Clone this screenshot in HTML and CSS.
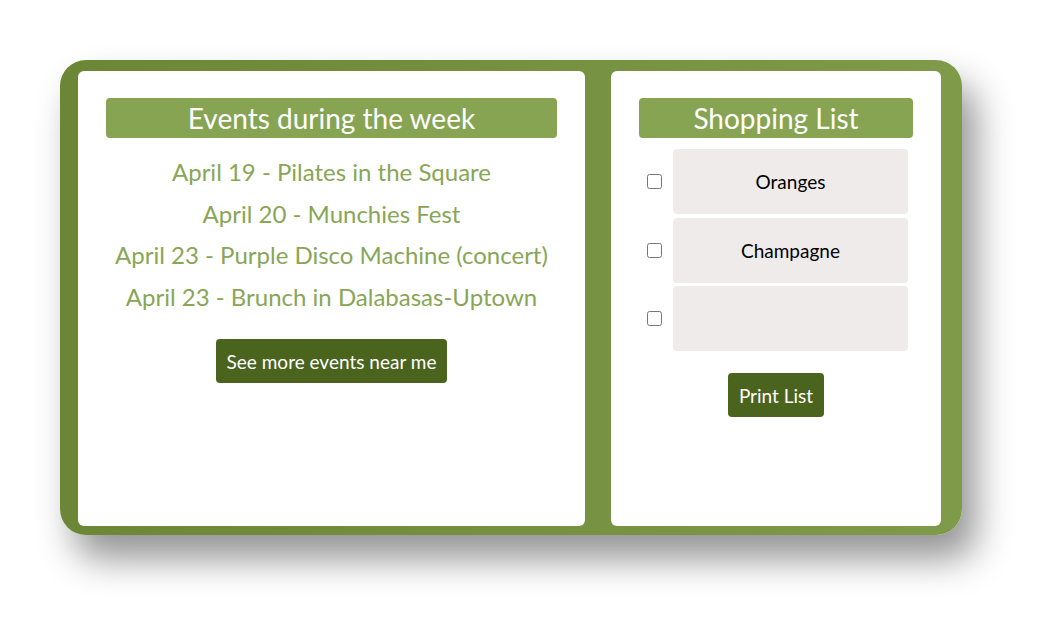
FILE: index.html
```html
<!DOCTYPE html>
<html lang="en">
<head>
  <meta charset="UTF-8">
  <meta name="viewport" content="width=device-width, initial-scale=1">
  <title>Weekly Board</title>
  <link rel="stylesheet" href="styles.css">
</head>
<body>

  <!-- board -->
  <div class="board">

    <!-- events -->
    <section class="card card-events">
      <h2 class="card-title">Events during the week</h2>
      <ul class="event-list">
        <li>April 19 - Pilates in the Square</li>
        <li>April 20 - Munchies Fest</li>
        <li>April 23 - Purple Disco Machine (concert)</li>
        <li>April 23 - Brunch in Dalabasas-Uptown</li>
      </ul>
      <button class="btn" type="button">See more events near me</button>
    </section>

    <!-- shopping list -->
    <section class="card card-shop">
      <h2 class="card-title">Shopping List</h2>
      <div class="shop-list">
        <label class="shop-row">
          <input type="checkbox">
          <span class="shop-item">Oranges</span>
        </label>
        <label class="shop-row">
          <input type="checkbox">
          <span class="shop-item">Champagne</span>
        </label>
        <label class="shop-row">
          <input type="checkbox">
          <span class="shop-item"></span>
        </label>
      </div>
      <button class="btn btn-print" type="button">Print List</button>
    </section>

  </div>

</body>
</html>
```

FILE: styles.css
```css
/* reset */
*, *::before, *::after { margin:0; padding:0; box-sizing:border-box; }
html, body { width:100%; min-height:100vh; }

body {
  background:#fff;
  padding:60px;
  font-family:'Lato','Open Sans',sans-serif;
}

/* 外枠 */
.board {
  width:902px; height:475px;
  display:flex; gap:26px;
  padding:11px 21px 9px 18px;
  border-radius:26px;
  background:linear-gradient(to right,#6a8636,#7f9b4a);
  box-shadow:14px 24px 36px rgba(0,0,0,0.42);
}

/* カード */
.card {
  background:#fff;
  border-radius:6px;
  padding:27px 28px;
  display:flex; flex-direction:column; align-items:center;
}
.card-events { width:507px; }
.card-shop   { width:330px; }

.card-title {
  width:100%; height:40px;
  background:#87a453;
  border-radius:4px;
  color:#fff;
  font-size:28px; font-weight:normal;
  line-height:40px; text-align:center;
}

/* イベント */
.event-list {
  list-style:none;
  margin-top:13px;
  text-align:center;
  color:#88a655;
  font-size:24px; line-height:41.5px;
}

/* ボタン */
.btn {
  background:#4a641e;
  color:#fff;
  border:none; border-radius:4px;
  font-family:inherit; font-size:19px;
  height:44px; padding:0 11px;
  cursor:pointer;
}
.card-events .btn { margin-top:22px; }
.btn-print { margin-top:22px; }

/* 買い物リスト */
.shop-list {
  margin-top:11px;
  display:flex; flex-direction:column; gap:3.5px;
}
.shop-row {
  display:flex; align-items:center; gap:11px;
  margin-left:3px;
}
.shop-row input { width:15px; height:15px; margin:0; }
.shop-item {
  width:235px; height:65px;
  background:#eeebea;
  border-radius:4px;
  display:flex; align-items:center; justify-content:center;
  color:#000; font-size:19px;
}
```
